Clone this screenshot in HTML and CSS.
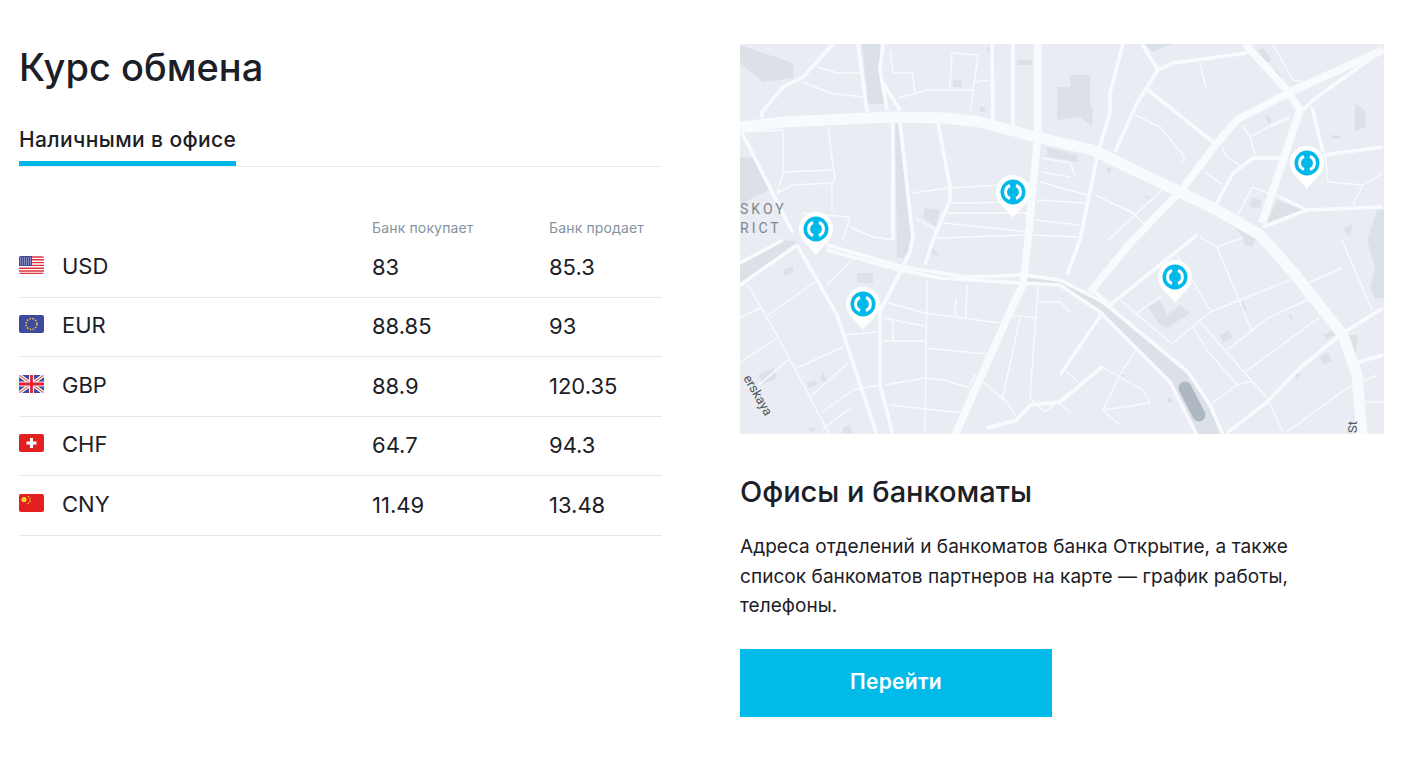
FILE: index.html
```html
<!DOCTYPE html>
<html lang="ru">

<head>
    <meta charset="UTF-8">
    <title>Курс обмена</title>
    <link rel="stylesheet" href="styles.css">
</head>

<body>
    <div class="page">
        <!-- Exchange rates -->
        <section class="rates">
            <h1 class="rates-title">Курс обмена</h1>
            <div class="tabs">
                <div class="tab">Наличными в офисе</div>
            </div>
            <div class="rates-head">
                <span></span>
                <span>Банк покупает</span>
                <span>Банк продает</span>
            </div>
            <div class="rate-row">
                <div class="currency">
                    <svg class="flag" viewBox="0 0 25 18">
                        <rect class="flag-bg-white" width="25" height="18"/>
                        <path class="us-stripes" d="M0 1h25M0 3.8h25M0 6.6h25M0 9.4h25M0 12.2h25M0 15h25M0 17.4h25"/>
                        <rect class="us-canton" width="13" height="10"/>
                        <path class="us-stars" d="M1 2h11M1 4h11M1 6h11M1 8h11"/>
                    </svg>
                    <span>USD</span>
                </div>
                <div>83</div>
                <div>85.3</div>
            </div>
            <div class="rate-row">
                <div class="currency">
                    <svg class="flag" viewBox="0 0 25 18">
                        <rect class="eu-bg" width="25" height="18"/>
                        <circle class="eu-stars" cx="12.5" cy="9" r="5.5"/>
                    </svg>
                    <span>EUR</span>
                </div>
                <div>88.85</div>
                <div>93</div>
            </div>
            <div class="rate-row">
                <div class="currency">
                    <svg class="flag" viewBox="0 0 25 18">
                        <rect class="gb-bg" width="25" height="18"/>
                        <path class="gb-diag-white" d="M0 0l25 18M25 0L0 18"/>
                        <path class="gb-diag-red" d="M0 0l25 18M25 0L0 18"/>
                        <path class="gb-cross-white" d="M12.5 0v18M0 9h25"/>
                        <path class="gb-cross-red" d="M12.5 0v18M0 9h25"/>
                    </svg>
                    <span>GBP</span>
                </div>
                <div>88.9</div>
                <div>120.35</div>
            </div>
            <div class="rate-row">
                <div class="currency">
                    <svg class="flag" viewBox="0 0 25 18">
                        <rect class="red-bg" width="25" height="18"/>
                        <path class="ch-cross" d="M12.5 4v10M7.5 9h10"/>
                    </svg>
                    <span>CHF</span>
                </div>
                <div>64.7</div>
                <div>94.3</div>
            </div>
            <div class="rate-row">
                <div class="currency">
                    <svg class="flag" viewBox="0 0 25 18">
                        <rect class="red-bg" width="25" height="18"/>
                        <circle class="cn-star" cx="5" cy="5.5" r="2.6"/>
                        <circle class="cn-star" cx="9.5" cy="2.5" r=".8"/>
                        <circle class="cn-star" cx="11" cy="4.8" r=".8"/>
                        <circle class="cn-star" cx="11" cy="7.4" r=".8"/>
                        <circle class="cn-star" cx="9.3" cy="9.4" r=".8"/>
                    </svg>
                    <span>CNY</span>
                </div>
                <div>11.49</div>
                <div>13.48</div>
            </div>
        </section>

        <!-- Offices and ATMs -->
        <section class="offices">
            <svg class="map" viewBox="0 0 644 390">
                <defs>
                    <g id="pin">
                        <path class="pin-body" d="M0 26C-4 19-17 12-17 0a17 17 0 0 1 34 0C17 12 4 19 0 26z"/>
                        <circle class="pin-dot" r="12.5"/>
                        <path class="pin-arc" d="M-3 -6.5A7 7 0 0 0 -3 6.5M3 -6.5A7 7 0 0 1 3 6.5"/>
                    </g>
                </defs>
                <rect class="map-bg" width="644" height="390"/>

                <!-- buildings and squares -->
                <path class="block" d="M0 1L53 19V34L23 38L0 19z
                    M122 0H140L145 60H128z
                    M155 79H160L172 196L170 206L163 214L157 213z
                    M213 36H222V43H213zM240 63H245V68H240zM247 3H250V8H247zM277 16H292V21H277z
                    M0 113L13 114L30 146L0 160z
                    M185 164L200 166L195 183L183 173z
                    M307 103L338 111L337 118L307 113z
                    M317 43H330V31H350V59L353 68L352 83L340 73L317 76z
                    M367 124H372L368 131zM403 149L410 154L407 156z
                    M405 0H433L412 8zM517 6L523 4L532 16L527 19zM533 19L547 43L540 39z
                    M525 71H528L532 78L528 79zM592 91L600 92V95H592z
                    M615 59L626 68L625 83L615 88z
                    M537 156L563 166L527 179z
                    M512 154L522 156L520 164L510 163z
                    M495 183L517 196L502 193z
                    M603 186L613 179L610 193z
                    M627 196L637 166H644V254H635L630 244L635 224z
                    M117 229H133V239H117zM43 226L53 223V228L45 232z
                    M18 331L33 324L37 334L23 340zM67 339L75 336L77 341L68 344zM80 336L83 328L88 338z
                    M65 386L75 383V388zM103 384L110 381L112 389H103zM192 204L200 211H192z
                    M408 263L420 256L427 271L440 261L450 269L427 284L420 281z
                    M498 259L503 258L507 266L502 268zM548 271H553L552 276z
                    M480 291L488 286L493 294L483 299zM502 191H517L512 203L505 201z
                    M583 291L593 286L595 291L587 295zM580 313L588 308L592 318L583 321z
                    M608 291H618L615 314H610zM553 331L560 329L558 336z
                    M378 329L385 331L383 334zM427 354H432V359H428zM433 328L440 327V333z
                    M0 219L43 196L57 198L0 241z
                    M283 232L330 240L363 259L448 328L470 361L483 391H457L430 338L360 268L320 241L283 238z"/>
                <path class="pond" d="M445 344L459 371"/>

                <!-- small streets -->
                <path class="road-xs" d="M77 23L97 29H120M63 38L90 49L123 53M150 6L153 29H172L175 48M158 54L187 46H233M212 9L238 11L230 68M212 9L210 44M235 38L250 36
                    M6 88L43 86V129L37 149M88 83L95 136L92 139V166M43 128L93 126M37 149L53 141L92 139M62 169L110 173L103 196M110 183L133 193L153 196
                    M172 149L210 144L293 139M210 159L293 158M207 169L290 169M203 179L290 188M175 174L197 186M197 194L287 191
                    M302 114L330 119L335 131M302 128L330 133M300 138L347 151M297 156L345 159M295 176L340 181M293 191L338 193
                    M355 151L393 169L407 183M422 146L368 196M395 71L420 83L445 113L442 118M460 19L466 44M502 81L510 93L515 111M510 93L550 71M530 83L550 74
                    M482 103L487 113L500 121M465 128L483 141M498 171L512 143L540 153M533 1L553 36L565 38M585 111L588 138L623 141M623 141L613 161M623 141L643 129
                    M8 241L38 293L90 391M28 271L75 238M0 274L22 263M0 318L38 294M13 346L50 314M57 324L103 303M72 351L108 319M82 368L113 346L140 341M82 386L110 364
                    M87 241L112 216M105 291L137 288M148 259L185 269L260 279M143 274L185 282M153 276V296M143 297H185M187 236L185 391M185 304L247 310
                    M227 241L226 273M216 254L215 271M145 341L185 334L203 336L230 344M150 361L223 369M230 341L235 331L267 358L277 374
                    M273 271L295 274M280 274L262 356M298 243L290 354L305 368L330 348M298 258H320L330 268M318 358L330 368
                    M327 328L338 338M362 323L403 346L410 359L363 366L380 381M380 331L397 304M363 366L380 331
                    M397 269L423 251M380 256L430 298M430 301L470 268L550 236M477 203L512 288M460 193L477 203L502 194M437 211L470 266
                    M452 281L467 306L497 341M460 278L527 354L543 388M487 306L528 274L567 256M505 328L580 273M472 359L497 341L512 337M568 239L602 224M602 196L632 266
                    M547 388L607 344L637 331M625 358H643"/>

                <!-- medium roads -->
                <path class="road-md" d="M22 74V68L43 43L63 33L93 0M118 0L127 68M143 0L140 26L147 66M143 39L160 66M273 0V83M252 0L253 76
                    M153 79V196M160 79L173 196M198 79L210 143V156L193 196L185 221
                    M0 219L43 196M0 241L57 201M87 201L163 223L227 233L283 231L320 236L363 258L448 328L470 361L483 391M87 206L160 226L200 234L283 239L320 241L360 268L430 338L457 391
                    M173 191L170 208L140 268V341L153 391M163 223L139 268M383 0L370 49V69L358 109L340 196L327 231
                    M402 0L418 26L397 59L375 108M418 26L433 19L507 9M408 46L473 98M572 63L583 108M643 6L573 56L563 66M583 111L643 103M543 114H513L493 129L473 166
                    M540 153L567 166L643 163M523 183L567 166M350 244L370 261L457 191M320 331L363 268M487 389L527 358L560 324L600 291L643 264M615 319L643 311
                    M57 201L97 271L137 391M2 89L53 189M247 384L277 376L290 361L320 358L362 323"/>

                <!-- main roads -->
                <path class="road-lg" d="M0 83L43 78L150 73L207 74L240 78L300 94L353 106L400 129L440 148L477 166L520 191L553 228L603 291L617 331L622 391"/>
                <path class="road-lg thin" d="M393 196L440 148L477 99L497 76L550 48L643 6M505 0L547 46L560 66L522 179M298 0V89L288 196L283 241L273 261L215 391M350 248L393 196"/>

                <!-- labels -->
                <text class="map-label" x="0" y="170">SKOY</text>
                <text class="map-label" x="0" y="189">RICT</text>
                <text class="street-label" transform="translate(3 334) rotate(60)">erskaya</text>
                <text class="street-label" transform="translate(617 389) rotate(-90)">St</text>

                <use href="#pin" x="273" y="148"/>
                <use href="#pin" x="76" y="185"/>
                <use href="#pin" x="123" y="260"/>
                <use href="#pin" x="435" y="233"/>
                <use href="#pin" x="567" y="119"/>
            </svg>
            <h2 class="offices-title">Офисы и банкоматы</h2>
            <p class="offices-text">Адреса отделений и банкоматов банка Открытие, а также<br>список банкоматов партнеров на карте — график работы,<br>телефоны.</p>
            <a class="go-button" href="#">Перейти</a>
        </section>
    </div>
</body>

</html>
```

FILE: styles.css
```css
/* Overall page */

body {
    margin: 0;
    background: #ffffff;
    color: #1c2026;
    font-family: 'Inter', 'Noto Sans', sans-serif;
}

.page {
    display: flex;
    gap: 78px;
    padding: 43px 0 0 19px;
}

/* Left column */

.rates {
    width: 643px;
}

.rates-title {
    margin: 0;
    font-size: 38px;
    line-height: 48px;
    font-weight: 500;
}

.tabs {
    margin-top: 26px;
    border-bottom: 1px solid #e8ebef;
    height: 49px;
    display: flex;
}

.tab {
    box-sizing: border-box;
    height: 49px;
    padding-top: 9px;
    font-size: 21px;
    letter-spacing: 0.4px;
    line-height: 28px;
    font-weight: 500;
    border-bottom: 5px solid #00b9e9;
}

.rates-head,
.rate-row {
    display: grid;
    grid-template-columns: 353px 177px 1fr;
}

.rates-head {
    margin-top: 52px;
    margin-bottom: 1px;
    font-size: 14px;
    letter-spacing: 0.15px;
    line-height: 18px;
    color: #8592a0;
}

.rate-row {
    box-sizing: border-box;
    height: 59.5px;
    align-items: center;
    border-bottom: 1px solid #e3e8ef;
    font-size: 22px;
    padding-bottom: 1px;
}

.currency {
    display: flex;
    align-items: center;
    gap: 18px;
}

.currency span {
    margin-top: -2px;
}

/* Flags */

.flag {
    width: 25px;
    height: 18px;
    border-radius: 2px;
    margin-top: -4px;
}

.flag-bg-white {
    fill: #ffffff;
}

.us-stripes {
    stroke: #e0323c;
    stroke-width: 1.4;
}

.us-canton {
    fill: #41479b;
}

.us-stars {
    stroke: #c8cbe8;
    stroke-width: 1;
    stroke-dasharray: 1 1;
}

.eu-bg {
    fill: #3f4a9e;
}

.eu-stars {
    fill: none;
    stroke: #f5d02a;
    stroke-width: 1.5;
    stroke-dasharray: 1.5 1.4;
}

.gb-bg {
    fill: #41479b;
}

.gb-diag-white {
    stroke: #f5f5f5;
    stroke-width: 3.6;
}

.gb-diag-red {
    stroke: #e0323c;
    stroke-width: 1;
}

.gb-cross-white {
    stroke: #f5f5f5;
    stroke-width: 5;
}

.gb-cross-red {
    stroke: #e0232b;
    stroke-width: 2.8;
}

.red-bg {
    fill: #e3201f;
}

.ch-cross {
    stroke: #ffffff;
    stroke-width: 3;
}

.cn-star {
    fill: #f7d02c;
}

/* Right column */

.offices {
    width: 644px;
    padding-top: 1px;
}

.map {
    display: block;
    width: 644px;
    height: 390px;
}

.map-bg {
    fill: #e9ecf3;
}

.block {
    fill: #dce1e8;
}

.pond {
    fill: none;
    stroke: #aeb8c0;
    stroke-width: 13;
    stroke-linecap: round;
}

.road-xs,
.road-md,
.road-lg {
    fill: none;
    stroke: #f8fbfe;
    stroke-linejoin: round;
}

.road-xs {
    stroke-width: 1.4;
}

.road-md {
    stroke-width: 3.6;
}

.road-lg {
    stroke-width: 11;
}

.road-lg.thin {
    stroke-width: 7.5;
}

.map-label {
    fill: #7d8790;
    font-size: 14px;
    letter-spacing: 3px;
    font-family: 'Roboto', sans-serif;
}

.street-label {
    fill: #4d565e;
    font-size: 13px;
    font-family: 'Roboto', sans-serif;
}

.pin-body {
    fill: #ffffff;
}

.pin-dot {
    fill: #00b9e9;
}

.pin-arc {
    fill: none;
    stroke: #ffffff;
    stroke-width: 3;
}

.offices-title {
    margin: 38px 0 0;
    font-size: 29px;
    line-height: 40px;
    font-weight: 500;
}

.offices-text {
    margin: 20px 0 0;
    font-size: 19px;
    letter-spacing: 0.06px;
    line-height: 29.5px;
}

.go-button {
    display: block;
    width: 312px;
    height: 68px;
    margin-top: 28px;
    background: #00bbea;
    color: #ffffff;
    font-size: 21px;
    letter-spacing: 0.3px;
    font-weight: 600;
    line-height: 66px;
    text-align: center;
    text-decoration: none;
}
```
